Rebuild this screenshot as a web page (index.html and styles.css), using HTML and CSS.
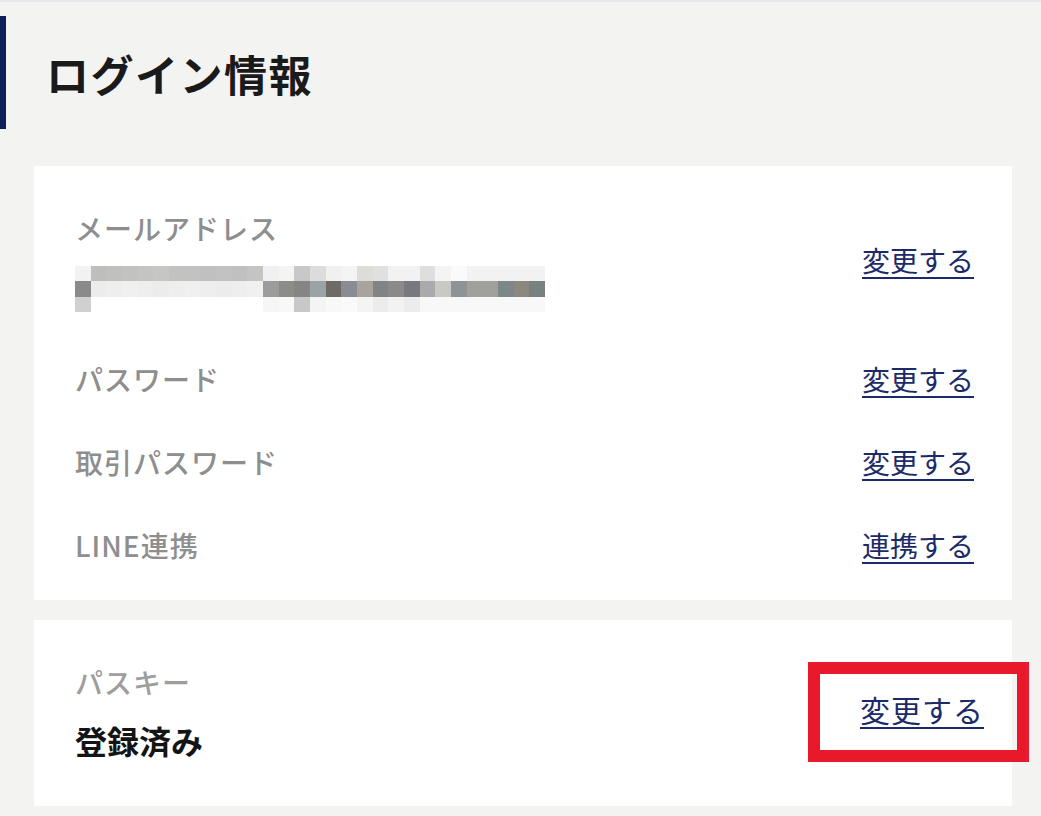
FILE: index.html
```html
<!doctype html>
<html lang="ja">
<head>
    <meta charset="UTF-8">
    <meta name="viewport" content="width=device-width, initial-scale=1.0">
    <title>ログイン情報</title>

    <link rel="stylesheet" href="styles.css">

</head>
<body>

    <div class="head">
        <h1 class="title">ログイン情報</h1>
    </div>

    <div class="card">
        <div class="row row-mail">
            <div class="info">
                <p class="label">メールアドレス</p>
                <div class="mosaic"></div>
            </div>
            <a class="link" href="#">変更する</a>
        </div>
        <div class="row">
            <p class="label">パスワード</p>
            <a class="link" href="#">変更する</a>
        </div>
        <div class="row">
            <p class="label">取引パスワード</p>
            <a class="link" href="#">変更する</a>
        </div>
        <div class="row">
            <p class="label">LINE連携</p>
            <a class="link" href="#">連携する</a>
        </div>
    </div>

    <div class="card card-passkey">
        <div class="info">
            <p class="label">パスキー</p>
            <p class="value">登録済み</p>
        </div>
        <span class="mark">
            <a class="link" href="#">変更する</a>
        </span>
    </div>

    <script>
        // hidden address: 3 rows of 30 tiles
        let mosaic = document.querySelector(".mosaic");
        const tiles = [
            ["#f2f2f2", "#bebebc", "#c0c0be", "#c2c2c0", "#c4c4c2", "#c6c6c4", "#c2c2c0", "#c2c2c2", "#c0c0c0", "#c2c2c2", "#c0c0c0", "#c4c4c2",
             "#eef0f2", "#f4f4f4", "#c8c8c8", "#dcdcdc", "#f0f0f0", "#f4f4f4", "#dedcd8", "#e0e0e0", "#f2f2f2", "#f2f2f2", "#dedede", "#f4f4f4",
             "#fafafa", "#f2f2f2", "#f2f2f2", "#f2f2f2", "#f2f2f2", "#f2f2f2"],
            ["#8a8a8a", "#ececec", "#eeeeee", "#f0f0f0", "#eeeeee", "#ececec", "#eeeeee", "#f0f0f0", "#eeeeee", "#ececec", "#eeeeee", "#f0f0f0",
             "#9c9c9a", "#8e8c88", "#858585", "#9aa4a6", "#6e6a66", "#8a8c94", "#a8a49c", "#808484", "#8c8a88", "#787880", "#aaaaaa", "#c8c8c4",
             "#8c9496", "#a0a09c", "#a0a09c", "#7c8888", "#8a8880", "#788080"],
            ["#d0d0d0", "#ffffff", "#ffffff", "#ffffff", "#ffffff", "#ffffff", "#ffffff", "#ffffff", "#ffffff", "#ffffff", "#ffffff", "#ffffff",
             "#f6f6f6", "#f8f8f8", "#c8c8c8", "#f4f4f4", "#f8f8f8", "#fafafa", "#f4f4f4", "#ececec", "#f2f2f2", "#ececec", "#f8f8f8", "#f8f8f8",
             "#f8f8f8", "#f8f8f8", "#f8f8f8", "#f8f8f8", "#f8f8f8", "#f8f8f8"]
        ];

        for (let r = 0; r < tiles.length; r++) {
            for (let c = 0; c < tiles[r].length; c++) {
                let tile = document.createElement("div");
                tile.style.background = tiles[r][c];
                mosaic.appendChild(tile);
            }
        }
    </script>
</body>
</html>
```

FILE: styles.css
```css
*{
    box-sizing: border-box;
}
body{
    margin: 0;
    background: #f3f3f2;
    border-top: 2px solid #e4e7ec;
    font-family: "Noto Sans CJK JP", "Noto Sans", sans-serif;
    padding-bottom: 10px;
}
p{
    margin: 0;
}
.head{
    margin-top: 14px;
    height: 113px;
    border-left: 6px solid #0c1f58;
    display: flex;
    align-items: center;
    padding-left: 40px;
}
.title{
    margin: 0;
    font-size: 43px;
    font-weight: bold;
    color: #1a1a1a;
    letter-spacing: 1.5px;
}
.card{
    background: #fff;
    margin: 37px 29px 0 34px;
    padding: 0 38px 14px 41px;
}
.row{
    height: 83px;
    display: flex;
    align-items: center;
    justify-content: space-between;
}
.row-mail{
    height: auto;
    padding-top: 42px;
    margin-bottom: 25px;
}
.label{
    font-size: 28px;
    line-height: 40px;
    font-weight: 500;
    color: #8e8e8e;
    letter-spacing: 1px;
}
.mosaic{
    margin-top: 18px;
    width: 470px;
    height: 46px;
    display: grid;
    grid-template-columns: repeat(30, 1fr);
    grid-template-rows: repeat(3, 1fr);
    filter: blur(0.4px);
}
.link{
    font-size: 28px;
    line-height: 40px;
    color: #1b2a68;
    text-decoration: underline;
    text-decoration-thickness: 2px;
    text-underline-offset: 5px;
}
.card-passkey{
    margin-top: 20px;
    padding: 42px 28px 44px 41px;
    display: flex;
    align-items: center;
    justify-content: space-between;
}
.card-passkey .label{
    color: #9e9e9e;
}
.card-passkey .link{
    font-size: 30px;
    letter-spacing: 1px;
}
.value{
    margin-top: 16px;
    font-size: 32px;
    line-height: 44px;
    font-weight: bold;
    color: #141414;
}
.mark{
    position: relative;
    display: inline-block;
    line-height: 40px;
}
.mark::after{
    content: "";
    position: absolute;
    top: -27px;
    bottom: -27px;
    left: -52px;
    right: -45px;
    border: 12px solid #e8192b;
}
```
